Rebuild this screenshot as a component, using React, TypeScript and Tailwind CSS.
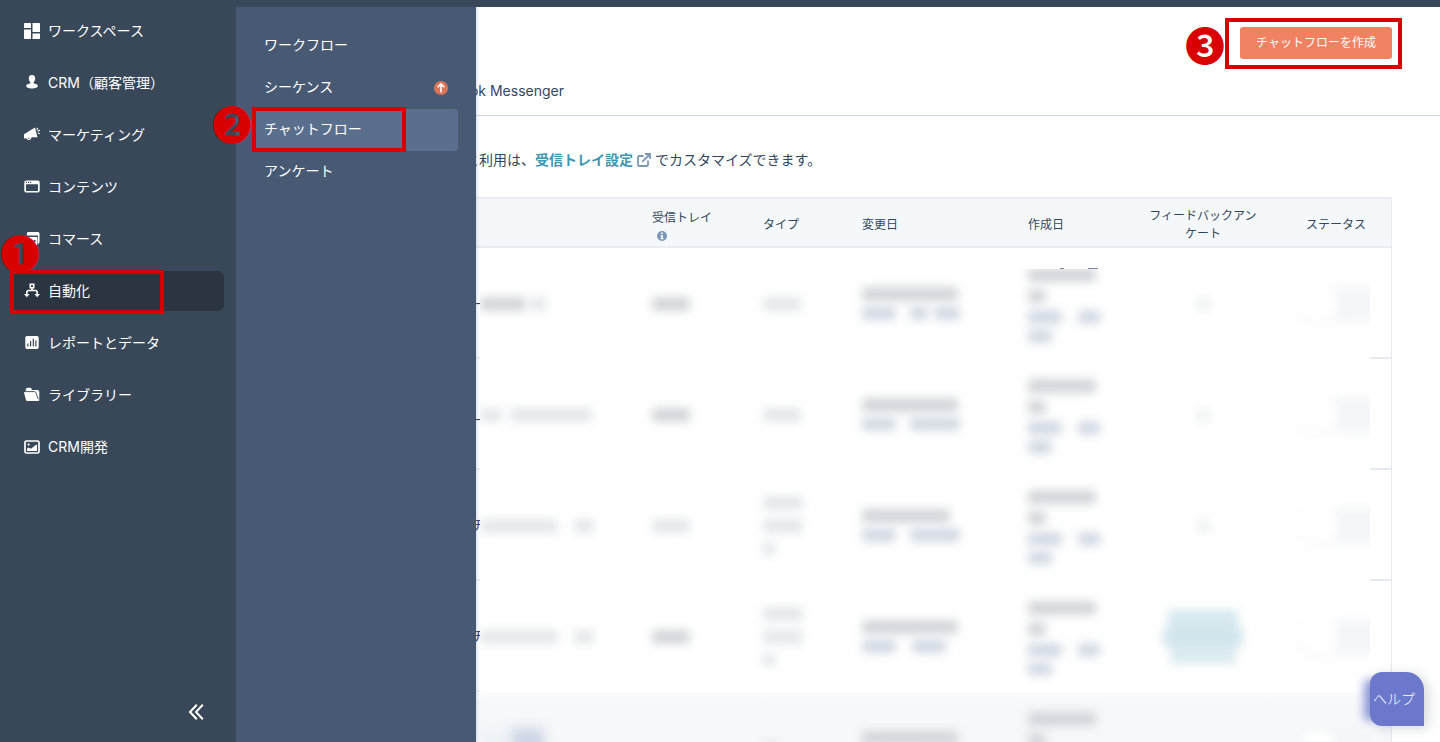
import type { ReactNode } from "react";

function Icon({ children }: { children: ReactNode }) {
  return (
    <svg viewBox="0 0 16 16" className="size-4 shrink-0" fill="currentColor" aria-hidden="true">
      {children}
    </svg>
  );
}

const icons = {
  workspace: (
    <Icon>
      <path d="M.8 0H7v5H0V.8Q0 0 .8 0ZM8.500 0h6.700q.8 0 .8.800V9H8.500ZM0 6.500h7V16H.8Q0 16 0 15.200ZM8.500 10.500H16v4.700q0 .8-.8.800H8.500Z" />
    </Icon>
  ),
  crm: (
    <Icon>
      <path d="M8 0c2.300 0 3.300 1.700 3.200 3.700-.1 1.600-.8 2.800-1.700 3.500v1c2 .5 4.200 1 4.300 2.500.1 1.700-2.700 2.800-5.800 2.800s-5.900-1.100-5.800-2.800c.1-1.500 2.300-2 4.300-2.500v-1c-.9-.7-1.600-1.900-1.700-3.500C4.700 1.700 5.700 0 8 0Z" />
    </Icon>
  ),
  marketing: (
    <Icon>
      <path d="M0 7.200 11 .6l2.500 9.600-6 .1c-.2 1.800-1.200 2.700-2.500 2.700S2.700 12.200 2.500 11.200L0 11.500Z" />
      <path d="M4 11c.2 1.300 1.600 1.300 1.800-.2Z" fill="#394859" />
      <path d="m12.700 2.600 1-1.600M13.500 4.300l2.300-1.200M13.800 6l2.100.5" fill="none" stroke="currentColor" strokeWidth="1.200" />
    </Icon>
  ),
  content: (
    <Icon>
      <path
        fillRule="evenodd"
        d="M2 1.500h12q1.700 0 1.700 1.700v8.600q0 1.700-1.700 1.700H2Q.3 13.500.3 11.800V3.200Q.3 1.500 2 1.500ZM2 5.200v6.200q0 .5.500.5h11q.5 0 .5-.5V5.200ZM1.800 2.800v1.100h1.100V2.800Zm2.100 0v1.100H5V2.800Zm2.100 0v1.100h1.100V2.800Z"
      />
    </Icon>
  ),
  commerce: (
    <Icon>
      <path fillRule="evenodd" d="M4 1h10q1.500 0 1.500 1.500v9L14 13V4.500H3Q2.500 1 4 1ZM1.500 6h11q1 0 1 1v6q0 1-1 1h-11q-1 0-1-1V7q0-1 1-1Zm8 3v2h2V9Z" />
    </Icon>
  ),
  automation: (
    <Icon>
      <path d="M6.300 1.300h3.400v3.400H6.300ZM8 4.700V7.500M2.800 11.500V9.500q0-2 2-2h6.400q2 0 2 2v2" fill="none" stroke="currentColor" strokeWidth="1.600" />
      <path d="M0 11h5.600L2.800 14.300ZM10.400 11H16l-2.800 3.300Z" />
    </Icon>
  ),
  reports: (
    <Icon>
      <path
        fillRule="evenodd"
        d="M3 1h10q1.700 0 1.700 1.700v9.600Q14.700 14 13 14H3q-1.700 0-1.700-1.700V2.700Q1.300 1 3 1Zm.3 7.500v3h1.200v-3ZM6 6v5.500h1.200V6Zm2.700-2.200v7.700h1.200V3.800Zm2.600 1.700v6h1.200v-6Z"
      />
    </Icon>
  ),
  library: (
    <Icon>
      <path d="M1.800 5V2.500Q1.800.7 3.500.7h2.600q1 0 1.300.8l.6 1.500h5.500q1.800 0 1.800 1.800v8.400Q15.300 14 14 14H3.300q-1 0-1.300-.9L.1 5.900Q-.1 5 .7 5Z" />
      <path d="M1.800 4.600h8.700q1 0 1.400.9l2.400 6.800" fill="none" stroke="#394859" strokeWidth=".9" />
    </Icon>
  ),
  developer: (
    <Icon>
      <rect x="1" y="2" width="14" height="12" rx="1.500" fill="none" stroke="currentColor" strokeWidth="1.700" />
      <circle cx="4.600" cy="5.500" r="1.100" />
      <path d="m3 11.900v-2.200l1.500-1.200 2.500 1.200 3.400-2.700q1-.8 2.600-1.500v6.400Z" />
    </Icon>
  ),
};

const sidebarItems: { label: string; icon: ReactNode; active?: boolean }[] = [
  { label: "ワークスペース", icon: icons.workspace },
  { label: "CRM（顧客管理）", icon: icons.crm },
  { label: "マーケティング", icon: icons.marketing },
  { label: "コンテンツ", icon: icons.content },
  { label: "コマース", icon: icons.commerce },
  { label: "自動化", icon: icons.automation, active: true },
  { label: "レポートとデータ", icon: icons.reports },
  { label: "ライブラリー", icon: icons.library },
  { label: "CRM開発", icon: icons.developer },
];

const submenuItems: { label: string; active?: boolean; upgrade?: boolean }[] = [
  { label: "ワークフロー" },
  { label: "シーケンス", upgrade: true },
  { label: "チャットフロー", active: true },
  { label: "アンケート" },
];

const badgeClass =
  "pointer-events-none absolute text-[40px] leading-[40px] font-medium text-[#d90000] font-['Noto_Sans_CJK_JP',sans-serif]";

function Sidebar() {
  return (
    <nav className="flex w-[236px] shrink-0 flex-col justify-between bg-[#394859] pt-1 text-white">
      <ul className="flex flex-col gap-3 px-3">
        {sidebarItems.map((item) => (
          <li key={item.label} className="relative">
            <a
              href="#"
              className={
                item.active
                  ? "flex h-10 items-center gap-2 rounded-md bg-[#2a3541] px-3"
                  : "flex h-10 items-center gap-2 px-3"
              }
            >
              {item.icon}
              {item.label}
            </a>
            {item.active && (
              <>
                <span className="pointer-events-none absolute -top-px -left-0.5 h-11 w-[154px] border-4 border-[#d90000]" />
                <span className={`${badgeClass} -top-[39px] -left-3`}>❶</span>
              </>
            )}
          </li>
        ))}
      </ul>
      <button type="button" aria-label="Collapse" className="mr-8 mb-[22px] self-end">
        <svg viewBox="0 0 16 16" className="size-4" fill="none" stroke="currentColor" strokeWidth="2" aria-hidden="true">
          <path d="M8.800.7 2 8l6.800 7.300M14.800.7 8 8l6.800 7.300" />
        </svg>
      </button>
    </nav>
  );
}

function Submenu() {
  return (
    <nav className="relative z-10 w-60 shrink-0 bg-[#485a73] pt-[18px] pr-[18px] pl-4 text-white shadow-[0_0_4px_rgba(72,90,150,0.35)]">
      <ul>
        {submenuItems.map((item) => (
          <li key={item.label} className="relative">
            <a
              href="#"
              className={
                item.active
                  ? "flex h-[42px] items-center justify-between rounded-sm bg-[#5a6f8e] px-3"
                  : "flex h-[42px] items-center justify-between px-3"
              }
            >
              <span className="pb-0.5">{item.label}</span>
              {item.upgrade && (
                <svg viewBox="0 0 14 14" className="-mr-0.5 size-3.5" aria-hidden="true">
                  <circle cx="7" cy="7" r="7" fill="#db7355" />
                  <path d="M7 11.500V3M3.600 6.300 7 2.900l3.400 3.400" fill="none" stroke="white" strokeWidth="1.600" />
                </svg>
              )}
            </a>
            {item.active && (
              <>
                <span className="pointer-events-none absolute -top-0.5 left-0 h-[45px] w-[154px] border-4 border-[#d90000]" />
                <span className={`${badgeClass} -top-1.5 -left-10`}>❷</span>
              </>
            )}
          </li>
        ))}
      </ul>
    </nav>
  );
}

const gray = "bg-[#d3d5da]";
const blue = "bg-[#d3dae4]";
const pale = "bg-[#e5e7ea]";

type Segment = { gap?: number; width: number; tone: string };

function BlurLine({ segments, tall }: { segments: Segment[]; tall?: boolean }) {
  return (
    <div className={tall ? "flex h-[23px] items-center" : "flex h-[19px] items-center"}>
      {segments.map((s, i) => (
        <span key={i} className={`h-3.5 shrink-0 rounded-sm blur-[5px] ${s.tone}`} style={{ width: s.width, marginLeft: s.gap ?? 0 }} />
      ))}
    </div>
  );
}

type Row = {
  edge: string;
  name: Segment[];
  tray?: string;
  typeLines: number[];
  modified: number;
  time: Segment[];
  feedback: "none" | "dash" | "link";
};

const rows: Row[] = [
  {
    edge: "-",
    name: [{ width: 46, tone: gray }, { gap: 4, width: 16, tone: pale }],
    tray: gray,
    typeLines: [38],
    modified: 96,
    time: [{ width: 34, tone: blue }, { gap: 14, width: 18, tone: blue }, { gap: 6, width: 26, tone: blue }],
    feedback: "dash",
  },
  {
    edge: "_",
    name: [{ width: 22, tone: pale }, { gap: 8, width: 82, tone: pale }],
    tray: gray,
    typeLines: [38],
    modified: 96,
    time: [{ width: 34, tone: blue }, { gap: 14, width: 50, tone: blue }],
    feedback: "dash",
  },
  {
    edge: "チ",
    name: [{ width: 78, tone: pale }, { gap: 16, width: 20, tone: pale }],
    tray: pale,
    typeLines: [40, 40, 12],
    modified: 88,
    time: [{ width: 34, tone: blue }, { gap: 14, width: 50, tone: blue }],
    feedback: "dash",
  },
  {
    edge: "チ",
    name: [{ width: 78, tone: pale }, { gap: 16, width: 20, tone: pale }],
    tray: gray,
    typeLines: [40, 40, 12],
    modified: 96,
    time: [{ width: 34, tone: blue }, { gap: 16, width: 34, tone: blue }],
    feedback: "link",
  },
  {
    edge: "",
    name: [],
    typeLines: [14],
    modified: 96,
    time: [{ width: 34, tone: blue }, { gap: 14, width: 50, tone: blue }],
    feedback: "none",
  },
];

function TableRow({ row, first, last }: { row: Row; first: boolean; last: boolean }) {
  return (
    <tr className={last ? "h-[111px] bg-linear-to-b from-[#fbfcfd] to-[#f6f8fa] to-10%" : "h-[111px]"}>
      <td className="border-b-2 border-[#edf0f5]">
        <div className="flex w-1 justify-center overflow-hidden">{row.edge}</div>
      </td>
      <td>
        {last ? (
          <div className="flex h-16 items-center overflow-hidden">
            <span className="h-10 w-8 bg-[#eef3f8] blur-[5px]" />
            <span className="h-10 w-8 bg-[#cdd5e4] blur-[6px]" />
          </div>
        ) : (
          <div className="overflow-hidden py-3">
            <BlurLine segments={row.name} />
          </div>
        )}
      </td>
      <td>{row.tray && <BlurLine segments={[{ width: 38, tone: row.tray }]} />}</td>
      <td>
        {row.typeLines.map((width, i) => (
          <BlurLine key={i} tall segments={[{ width, tone: pale }]} />
        ))}
      </td>
      <td>
        <BlurLine segments={[{ width: row.modified, tone: gray }]} />
        <BlurLine segments={row.time} />
      </td>
      <td className="pt-5 align-top">
        <div className="flex h-px gap-6 pl-8">
          {first && (
            <>
              <span className="w-1 bg-[#7c8898]" />
              <span className="w-2.5 bg-[#7c8898]" />
            </>
          )}
        </div>
        <div className={first ? "-mx-4 h-[88px] overflow-hidden px-4" : "h-[88px]"}>
          <div className="-mt-1">
            <BlurLine segments={[{ width: 68, tone: gray }]} />
            <BlurLine tall segments={[{ width: 18, tone: gray }]} />
            <BlurLine segments={[{ width: 34, tone: blue }, { gap: 16, width: 22, tone: blue }]} />
            <BlurLine segments={[{ width: 24, tone: blue }]} />
          </div>
        </div>
      </td>
      <td>
        {row.feedback === "dash" && (
          <div className="flex justify-center">
            <BlurLine segments={[{ width: 14, tone: "bg-[#f1f2f3]" }]} />
          </div>
        )}
        {row.feedback === "link" && (
          <div className="flex flex-col items-center blur-[5px]">
            <span className="h-[18px] w-[70px] bg-[#d6e8ee]" />
            <span className="h-[18px] w-20 bg-[#d2e6ed]" />
            <span className="h-[18px] w-[66px] bg-[#dcebf0]" />
          </div>
        )}
      </td>
      <td>
        <div className="flex h-16 items-center justify-end overflow-hidden">
          <span className="z-10 size-9 rounded-full bg-white shadow-[0_1px_6px_rgba(0,0,0,0.08)] blur-[5px]" />
          <span className="-mr-3 h-9 w-[46px] bg-[#f4f6f9] blur-[5px]" />
        </div>
      </td>
      <td className="border-r border-b-2 border-[#e6e9ef]" />
    </tr>
  );
}

function ChatflowTable() {
  return (
    <table className="w-full table-fixed border-separate border-spacing-0">
      <colgroup>
        <col className="w-1" />
        <col />
        <col className="w-[111px]" />
        <col className="w-[99px]" />
        <col className="w-[166px]" />
        <col className="w-[112px]" />
        <col className="w-[126px]" />
        <col className="w-[104px]" />
        <col className="w-[22px]" />
      </colgroup>
      <thead>
        <tr className="h-[51px] bg-[#f5f8fa] text-left text-xs leading-[18px] *:border-y-2 *:border-[#e9ecf1] *:pt-1 *:font-normal">
          <th colSpan={2} />
          <th>
            受信トレイ
            <svg viewBox="0 0 10 10" className="mt-1 ml-[5px] size-2.5" aria-hidden="true">
              <circle cx="5" cy="5" r="5" fill="#7c98b6" />
              <path d="M4.200 1.500h1.600V3H4.200ZM3.600 4h2.200v3.200h.7v1H3.500v-1h.7V5h-.6Z" fill="white" />
            </svg>
          </th>
          <th>タイプ</th>
          <th>変更日</th>
          <th>作成日</th>
          <th className="px-2 text-center">フィードバックアンケート</th>
          <th colSpan={2} className="border-r pl-10">ステータス</th>
        </tr>
      </thead>
      <tbody>
        {rows.map((row, i) => (
          <TableRow key={i} row={row} first={i === 0} last={i === rows.length - 1} />
        ))}
      </tbody>
    </table>
  );
}

export default function App() {
  return (
    <div className="relative flex h-screen flex-col overflow-hidden bg-white text-sm text-[#33475b] font-[Inter,'Noto_Sans_CJK_JP',sans-serif]">
      <div className="h-[7px] shrink-0 bg-[#394859]" />
      <div className="flex min-h-0 flex-1">
        <Sidebar />
        <Submenu />
        <main className="min-w-0 flex-1 overflow-hidden">
          <header className="border-b border-[#cbd6e2]">
            <div className="flex justify-end pt-5 pr-12">
              <div className="relative">
                <button type="button" className="h-8 rounded-[3px] bg-[#f08262] px-4 text-xs text-white">
                  チャットフローを作成
                </button>
                <span className="pointer-events-none absolute -top-[9px] -right-2.5 h-[51px] w-[177px] border-4 border-[#d90000]" />
                <span className={`${badgeClass} -top-[3px] right-[167px]`}>❸</span>
              </div>
            </div>
            <div className="flex h-14 items-center pt-2">
              <a href="#" className="flex w-[88px] justify-end whitespace-nowrap">
                ok Messenger
              </a>
            </div>
          </header>
          <div className="pr-12">
            <p className="flex h-[81px] items-center pt-1.5">
              <span className="flex w-[59px] justify-end whitespace-nowrap">と利用は、</span>
              <a href="#" className="flex items-center gap-1 font-bold text-[#3e97b1]">
                受信トレイ設定
                <svg viewBox="0 0 14 14" className="size-3.5" fill="none" stroke="#7c98b6" strokeWidth="1.800" aria-hidden="true">
                  <path d="M6.500 3H2.200Q1 3 1 4.200v7.600Q1 13 2.200 13h7.600q1.200 0 1.200-1.200V7.500M8 1h5v5M13 1 5.200 8.800" />
                </svg>
              </a>
              <span className="pl-1">でカスタマイズできます。</span>
            </p>
            <ChatflowTable />
          </div>
        </main>
      </div>
      <div className="absolute right-4 bottom-4">
        <span className="absolute top-2 -left-1.5 h-10 w-4 bg-[#8f99d8] blur-[5px]" />
        <button
          type="button"
          className="relative h-[54px] w-[54px] rounded-tl-xl rounded-tr-[18px] rounded-bl-xl bg-[#6b78cb] pr-1.5 font-light whitespace-nowrap text-white shadow-[4px_2px_12px_rgba(45,62,80,0.2)]"
        >
          ヘルプ
        </button>
      </div>
    </div>
  );
}
